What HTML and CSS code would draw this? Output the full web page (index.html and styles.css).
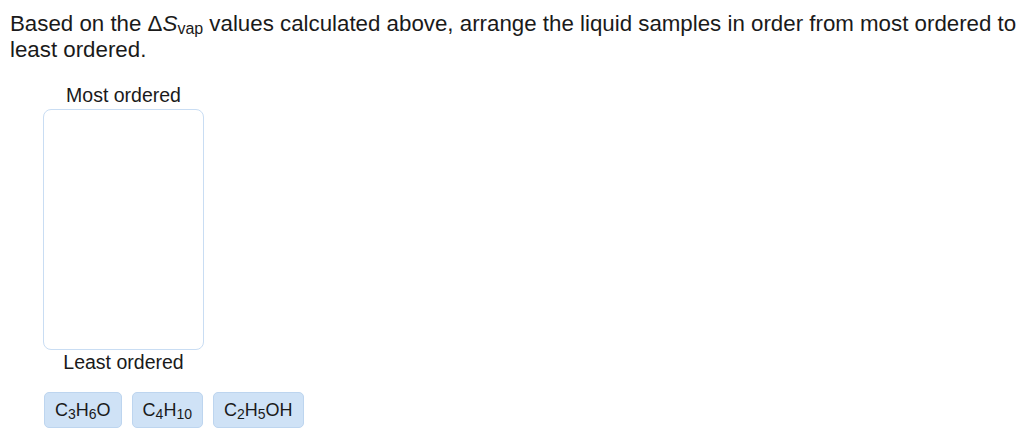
FILE: index.html
```html
<!DOCTYPE html>
<html lang="en">
<head>
  <meta charset="UTF-8">
  <title>Ranking</title>
  <link rel="stylesheet" href="styles.css">
</head>
<body>
  <p class="prompt">Based on the &Delta;<i>S</i><sub>vap</sub> values calculated above, arrange the liquid samples in order from most ordered to least ordered.</p>

  <div class="ranker">
    <div class="rankLabel">Most ordered</div>
    <div class="dropZone"></div>
    <div class="rankLabel">Least ordered</div>
  </div>

  <div class="tiles">
    <div class="tile">C<sub>3</sub>H<sub>6</sub>O</div>
    <div class="tile">C<sub>4</sub>H<sub>10</sub></div>
    <div class="tile">C<sub>2</sub>H<sub>5</sub>OH</div>
  </div>
</body>
</html>
```

FILE: styles.css
```css
body {
  margin: 0;
  padding: 11px 4px 0 10px;
  font-family: "Liberation Sans", Arial, sans-serif;
  color: #1a1a1a;
  background: #ffffff;
}

.prompt {
  margin: 0;
  font-size: 22.3px;
  line-height: 26px;
}

.prompt sub {
  font-size: 16px;
  line-height: 0;
  vertical-align: -3px;
}

/* 排序區 */
.ranker {
  width: 161px;
  margin: 20px 0 0 33px;
  display: flex;
  flex-direction: column;
  align-items: center;
}

.rankLabel {
  font-size: 19.5px;
  line-height: 24px;
}

.dropZone {
  box-sizing: border-box;
  width: 161px;
  height: 241px;
  margin-top: 2px;
  border: 1px solid #c9ddf3;
  border-radius: 8px;
}

.tiles {
  display: flex;
  gap: 10px;
  margin: 18px 0 0 34px;
}

.tile {
  background: #cfe2f6;
  border: 1px solid #bdd5ef;
  border-radius: 5px;
  line-height: 34px;
  padding: 0 10px;
  font-size: 18px;
}

.tile sub {
  font-size: 14px;
  line-height: 0;
  vertical-align: -3px;
}
```
